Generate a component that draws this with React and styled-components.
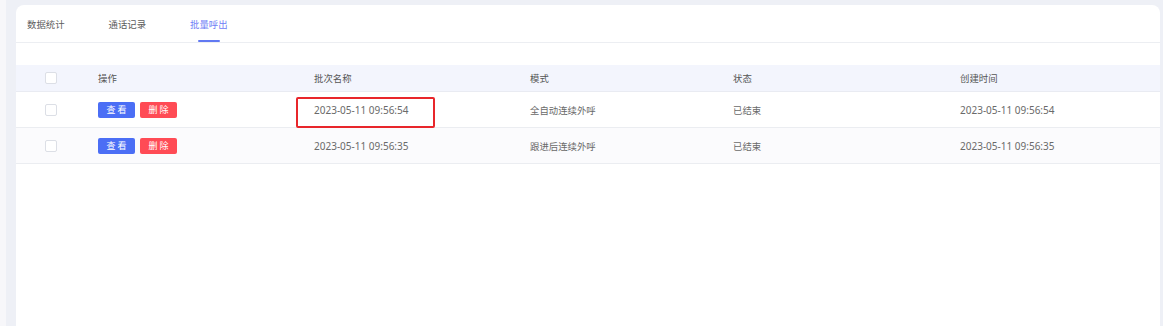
import React from "react";
import styled, { createGlobalStyle } from "styled-components";

const Global = createGlobalStyle`
  html, body { margin: 0; padding: 0; }
  body {
    background: #eef0f6;
    font-family: "Noto Sans", "Noto Sans CJK SC", sans-serif;
    -webkit-font-smoothing: antialiased;
  }
`;

const Page = styled.div`
  display: flex;
  height: 326px;
  overflow: hidden;
`;

const Rail = styled.div`
  width: 6px;
  background: #f7f7fa;
  flex: none;
`;

const Gutter = styled.div`
  flex: 1;
  display: flex;
  padding: 5px 3px 0 10px;
  min-width: 0;
`;

const Card = styled.div`
  flex: 1;
  background: #fff;
  border-radius: 8px 8px 0 0;
  min-width: 0;
`;

const TabBar = styled.div`
  display: flex;
  gap: 44px;
  height: 37px;
  padding-left: 11px;
  border-bottom: 1px solid #eceef2;
`;

const Tab = styled.div`
  position: relative;
  display: flex;
  align-items: center;
  font-size: 9.4px;
  color: ${(p) => (p.$active ? "#6f80f6" : "#5c5c5c")};
  &::after {
    content: "";
    display: ${(p) => (p.$active ? "block" : "none")};
    position: absolute;
    left: 50%;
    bottom: 0;
    width: 22px;
    height: 2px;
    margin-left: -11px;
    background: #6179f2;
    border-radius: 1px;
  }
`;

const Table = styled.div`
  margin-top: 22px;
`;

const Row = styled.div`
  display: grid;
  grid-template-columns: 70px 216px 216px 203px 227px 1fr;
  height: ${(p) => (p.$head ? "27px" : "36px")};
  align-items: stretch;
  background: ${(p) => (p.$head ? "#f3f5fd" : p.$striped ? "#fbfbfd" : "#fff")};
  border-bottom: 1px solid ${(p) => (p.$head ? "#e9ebf2" : "#ebedf1")};
  box-sizing: border-box;
`;

const Cell = styled.div`
  position: relative;
  padding: 0 12px;
  font-size: ${(p) => (p.$num ? "10px" : "9.4px")};
  color: ${(p) => (p.$head ? "#555" : "#6a6a6a")};
  display: flex;
  align-items: center;
  gap: 5px;
  white-space: nowrap;
`;

const CheckCell = styled.div`
  display: flex;
  align-items: center;
  justify-content: center;
`;

const Check = styled.span`
  width: 10px;
  height: 10px;
  border: 1px solid #dcdfe6;
  border-radius: 2px;
  background: #fff;
`;

const Btn = styled.button`
  width: 37px;
  height: 16px;
  border: none;
  border-radius: 2px;
  padding: 0;
  font-family: inherit;
  font-size: 9px;
  letter-spacing: 2px;
  text-indent: 2px;
  color: #fff;
  background: ${(p) => (p.$danger ? "#ff4b55" : "#4b6ef5")};
`;

const Highlight = styled.div`
  position: absolute;
  left: -6px;
  top: 5px;
  width: 139px;
  height: 31px;
  box-sizing: border-box;
  border: 2px solid #e8262b;
  border-radius: 2px;
`;

const rows = [
  { name: "2023-05-11 09:56:54", mode: "全自动连续外呼", status: "已结束", time: "2023-05-11 09:56:54", mark: true },
  { name: "2023-05-11 09:56:35", mode: "跟进后连续外呼", status: "已结束", time: "2023-05-11 09:56:35" },
];

export default function App() {
  return (
    <Page>
      <Global />
      <Rail />
      <Gutter>
        <Card>
          <TabBar>
            <Tab>数据统计</Tab>
            <Tab>通话记录</Tab>
            <Tab $active>批量呼出</Tab>
          </TabBar>
          <Table>
            <Row $head>
              <CheckCell><Check /></CheckCell>
              <Cell $head>操作</Cell>
              <Cell $head>批次名称</Cell>
              <Cell $head>模式</Cell>
              <Cell $head>状态</Cell>
              <Cell $head>创建时间</Cell>
            </Row>
            {rows.map((r, i) => (
              <Row key={i} $striped={i % 2 === 1}>
                <CheckCell><Check /></CheckCell>
                <Cell>
                  <Btn>查看</Btn>
                  <Btn $danger>删除</Btn>
                </Cell>
                <Cell $num>
                  {r.mark && <Highlight />}
                  {r.name}
                </Cell>
                <Cell>{r.mode}</Cell>
                <Cell>{r.status}</Cell>
                <Cell $num>{r.time}</Cell>
              </Row>
            ))}
          </Table>
        </Card>
      </Gutter>
    </Page>
  );
}
